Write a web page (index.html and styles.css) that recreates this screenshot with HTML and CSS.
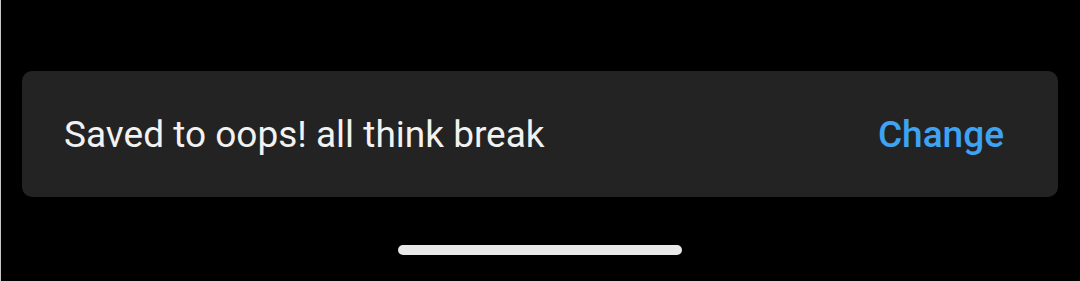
FILE: index.html
```html
<!DOCTYPE html>
<html>
<head>
    <title>Snackbar</title>
    <link rel="stylesheet" href="styles.css">
</head>
<body>
<div class="screen">
    <div class="snackbar">
        <span class="snackbar-text">Saved to oops! all think break</span>
        <span class="snackbar-action">Change</span>
    </div>
    <div class="home-indicator"></div>
</div>
</body>
</html>
```

FILE: styles.css
```css
html, body {
    margin: 0;
    padding: 0;
    background: #000;
}

body {
    font-family: Roboto, "Noto Sans", sans-serif;
}

.screen {
    width: 1080px;
    height: 281px;
    box-sizing: border-box;
    border-left: 1px solid #c8c8c8;
    padding-top: 71px;
    display: flex;
    flex-direction: column;
    align-items: center;
}

.snackbar {
    align-self: stretch;
    height: 126px;
    box-sizing: border-box;
    margin: 0 22px 0 21px;
    background: #232323;
    border-radius: 10px;
    display: flex;
    align-items: center;
    justify-content: space-between;
    padding: 0 54px 0 42px;
}

.snackbar-text {
    color: #f2f2f2;
    font-size: 37px;
}

.snackbar-action {
    color: #3ea3f3;
    font-size: 37px;
    font-weight: 500;
}

.home-indicator {
    margin-top: 48px;
    margin-right: 2px;
    width: 284px;
    height: 10px;
    border-radius: 5px;
    background: #e8e8e8;
}
```
